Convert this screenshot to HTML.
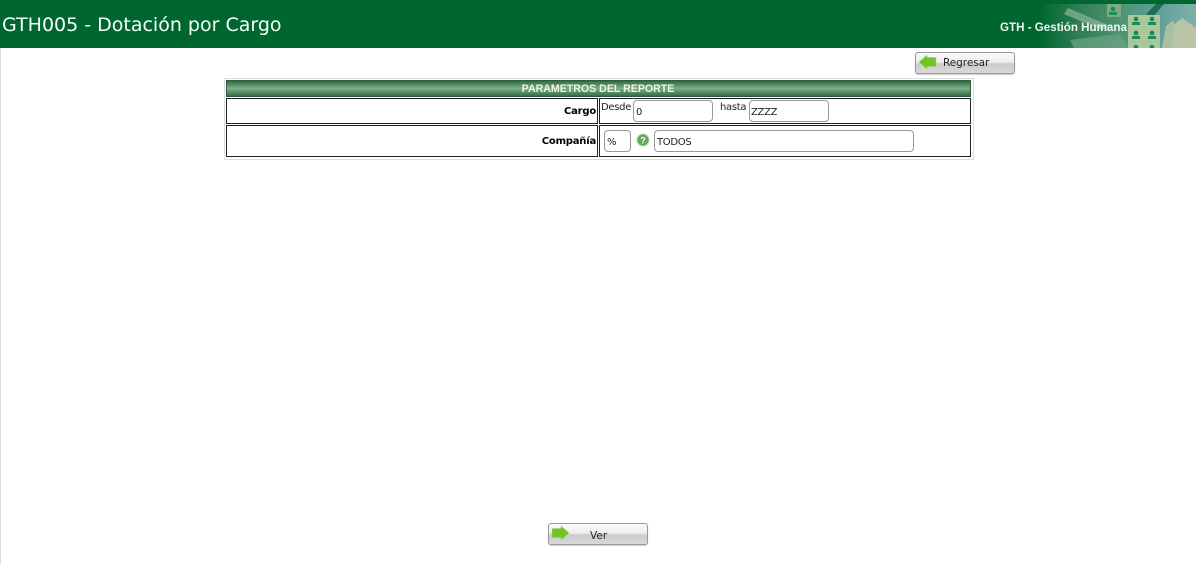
<!DOCTYPE html>
<html><head><meta charset="utf-8"><style>
html,body{margin:0;padding:0;background:#fff;width:1196px;height:564px;overflow:hidden;font-family:"DejaVu Sans","Liberation Sans",sans-serif}
div{position:absolute;box-sizing:border-box}
.t{white-space:nowrap;color:#000}
.box{border:1px solid #222;background:#fff}
.inp{border:1px solid #999;border-radius:4px;background:#fff;font-size:10px;letter-spacing:-.3px;color:#222;padding-left:2px;white-space:nowrap}
.btn{width:100px;height:22px;border:1px solid #999;border-radius:3px;background:linear-gradient(#fafafa,#eee 45%,#ccc 55%,#d8d8d8);box-shadow:0 1px 1px #ccc;font-size:11px;color:#222}
</style></head><body>
<div style="left:0;top:48px;width:1px;height:516px;background:#ddd"></div>
<div style="left:0;top:0;width:1196px;height:48px;background:#00662f"></div>
<svg style="position:absolute;left:1040px;top:4px" width="156" height="44">
<defs><linearGradient id="g" x1="0" x2="1" y1="0" y2="0"><stop offset="0" stop-color="#00662f"/><stop offset=".25" stop-color="#2f7f55"/><stop offset=".5" stop-color="#4d9272"/><stop offset=".75" stop-color="#5f9f98"/><stop offset="1" stop-color="#7fb0a8"/></linearGradient></defs>
<rect width="156" height="44" fill="url(#g)"/>
<path d="M28 4L70 22L62 26L24 10Z" fill="#9cc0a2" opacity=".6"/>
<path d="M30 36L80 30L88 44H34Z" fill="#6fa383" opacity=".7"/>
<path d="M116 0L124 0L112 14L106 10Z" fill="#1f6f55"/>
<path d="M128 44L130 24L142 14L156 24V44Z" fill="#b9c4a4"/>
<path d="M122 44L126 22L134 16L132 44Z" fill="#a9bfa0"/>
<rect x="67" width="14" height="13" fill="#7fa883"/>
<rect x="88" y="11" width="32" height="33" fill="#a9c79b"/>
</svg>
<svg style="position:absolute;left:1106px;top:4px" width="56" height="44" fill="#1a8a5a"><circle cx="7" cy="5" r="2.3"/><rect x="3" y="8" width="8" height="3"/><circle cx="30" cy="15" r="2.3"/><rect x="26" y="18" width="8" height="3"/><circle cx="46" cy="15" r="2.3"/><rect x="42" y="18" width="8" height="3"/><circle cx="30" cy="29" r="2.3"/><rect x="26" y="32" width="8" height="3"/><circle cx="46" cy="29" r="2.3"/><rect x="42" y="32" width="8" height="3"/><circle cx="30" cy="43" r="2.3"/><circle cx="46" cy="43" r="2.3"/></svg>
<div class="t" style="left:2px;top:13px;font-size:19px;line-height:24px;color:#f4fff6">GTH005 - Dotación por Cargo</div>
<div class="t" style="left:1000px;top:21px;font-size:11.6px;line-height:14px;font-weight:bold;color:#eef6ee;font-family:'Liberation Sans',sans-serif">GTH - Gestión Humana</div>

<div class="btn" style="left:915px;top:52px"></div>
<svg style="position:absolute;left:918px;top:54px" width="19" height="16"><path d="M1 8L9 1V3.5H18V12.5H9V15Z" fill="#74c225" stroke="#9fd860" stroke-width=".5"/></svg>
<div class="t" style="left:943px;top:56px;font-size:10.5px;line-height:14px;color:#222;letter-spacing:-.05px">Regresar</div>

<div style="left:224px;top:78px;width:750px;height:82px;border:1px solid #ddd"></div>
<div style="left:226px;top:80px;width:745px;height:17px;border:1px solid #2f5a3e;background:linear-gradient(#2f6b42,#7fae88 50%,#2f6f46)"></div>
<div class="t" style="left:225px;top:82px;width:746px;text-align:center;font-size:10.6px;line-height:14px;font-weight:bold;color:#eef5e0;font-family:'Liberation Sans',sans-serif">PARAMETROS DEL REPORTE</div>

<div class="box" style="left:226px;top:98px;width:372px;height:26px"></div>
<div class="box" style="left:599px;top:98px;width:372px;height:26px"></div>
<div class="box" style="left:226px;top:125px;width:372px;height:32px"></div>
<div class="box" style="left:599px;top:125px;width:372px;height:32px"></div>

<div class="t" style="left:498px;top:105px;width:98px;text-align:right;font-size:10px;line-height:14px;font-weight:bold;letter-spacing:-.2px">Cargo</div>
<div class="t" style="left:498px;top:135px;width:98px;text-align:right;font-size:10px;line-height:14px;font-weight:bold;letter-spacing:-.2px">Compañía</div>

<div class="t" style="left:601px;top:101px;font-size:10px;line-height:13px;letter-spacing:-.3px;color:#222">Desde</div>
<div class="inp" style="left:633px;top:100px;width:80px;height:22px;line-height:24px">0</div>
<div class="t" style="left:720px;top:101px;font-size:10px;line-height:13px;letter-spacing:-.3px;color:#222">hasta</div>
<div class="inp" style="left:749px;top:100px;width:80px;height:22px;line-height:24px;padding-left:1px">ZZZZ</div>

<div class="inp" style="left:604px;top:130px;width:27px;height:22px;line-height:23px">%</div>
<svg style="position:absolute;left:636px;top:133px" width="14" height="14"><circle cx="7" cy="7" r="6" fill="#5fa860" stroke="#b6d8b4"/><text x="7" y="10.5" text-anchor="middle" font-size="9" font-weight="bold" fill="#fff" font-family="Liberation Sans">?</text></svg>
<div class="inp" style="left:654px;top:130px;width:260px;height:22px;line-height:23px">TODOS</div>

<div class="btn" style="left:548px;top:523px"></div>
<svg style="position:absolute;left:551px;top:525px" width="19" height="16"><path d="M18 8L10 1V3.5H1V12.5H10V15Z" fill="#74c225" stroke="#9fd860" stroke-width=".5"/></svg>
<div class="t" style="left:590px;top:529px;font-size:10.5px;line-height:14px;color:#222">Ver</div>
</body></html>
